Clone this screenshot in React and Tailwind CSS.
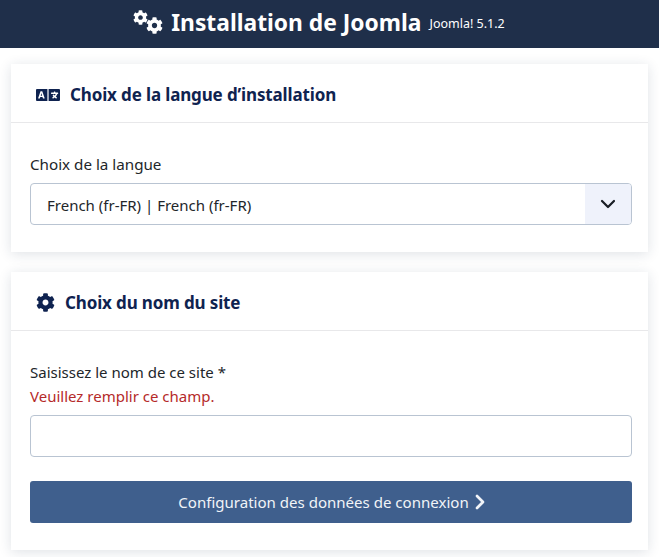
import React from "react";
import { FaCog, FaLanguage } from "react-icons/fa";
import { ChevronDown, ChevronRight } from "lucide-react";

function Card({ icon, title, children }) {
  return (
    <section className="bg-white shadow-[0_2px_12px_rgba(30,50,80,0.14)]">
      <header className="flex items-center gap-[10px] h-[59px] pt-[3px] px-[25px] border-b border-[#e8e8ea]">
        {icon}
        <h2 className="text-[17px] font-bold text-[#0f2350] tracking-[-0.14px]">{title}</h2>
      </header>
      <div className="pl-[19px] pr-[16px] pt-[31px]">{children}</div>
    </section>
  );
}

export default function App() {
  return (
    <div className="min-h-[557px] bg-white text-[15px] text-[#22262a] font-['Noto_Sans',sans-serif]">
      <div className="flex items-center justify-center h-12 pr-[21px] bg-[#1f2f4a] text-white">
        <div className="relative w-[30px] h-[24px] mr-[8px] -mt-[4px]">
          <FaCog className="absolute left-0 top-0 w-[15px] h-[15px]" />
          <FaCog className="absolute right-0 bottom-0 w-[17px] h-[17px]" />
        </div>
        <h1 className="text-[22.8px] font-bold -mt-[2px]">Installation de Joomla</h1>
        <span className="ml-[8px] text-[12.5px]">Joomla! 5.1.2</span>
      </div>

      <main className="flex flex-col gap-5 pt-4 px-[11px]">
        <Card title="Choix de la langue d’installation" icon={<FaLanguage className="w-[24px] h-[20px] text-[#0f2350]" />}>
          <label className="block leading-[20px] mb-[9px] text-[15.2px]">Choix de la langue</label>
          <div className="flex h-[42px] border border-[#b9c4d2] rounded-[4px] overflow-hidden mb-[27px]">
            <div className="flex-1 flex items-center pl-4 pt-[2px]">French (fr-FR) | French (fr-FR)</div>
            <div className="flex items-center justify-center w-[46px] bg-[#eff2fb]">
              <ChevronDown className="w-[24px] h-[24px] text-[#1a1f26]" strokeWidth={2.25} />
            </div>
          </div>
        </Card>

        <Card title="Choix du nom du site" icon={<FaCog className="w-[19px] h-[19px] text-[#0f2350]" />}>
          <label className="block leading-[20px]">Saisissez le nom de ce site *</label>
          <p className="leading-[20px] mt-[4px] mb-[9px] text-[#b52a2a]">Veuillez remplir ce champ.</p>
          <input className="block w-full h-[42px] border border-[#b9c4d2] rounded-[4px] bg-white" />
          <button className="flex items-center justify-center w-full h-[42px] pl-[6px] mt-6 mb-[27px] rounded-[3px] bg-[#3f5f8d] text-[#f1f4f8] text-[15.05px]">
            Configuration des données de connexion
            <ChevronRight className="w-[24px] h-[24px] -ml-[1px] -mr-[2px]" strokeWidth={2.75} />
          </button>
        </Card>
      </main>
    </div>
  );
}
